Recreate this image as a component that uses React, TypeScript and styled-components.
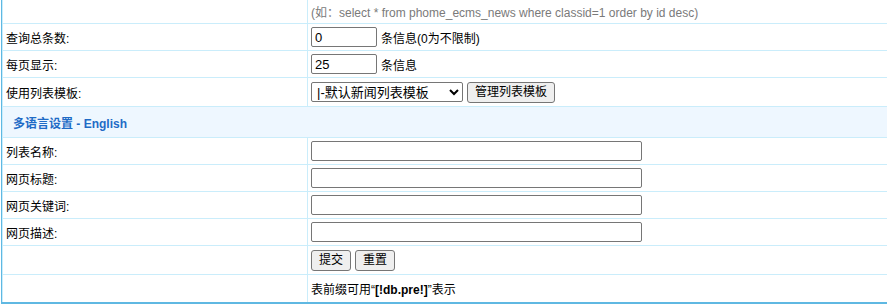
import React from 'react';
import styled, { createGlobalStyle } from 'styled-components';

const GlobalStyle = createGlobalStyle`
  html, body {
    margin: 0;
    padding: 0;
    background: #fff;
    overflow: hidden;
  }
  body {
    font-family: "Liberation Sans", "Noto Sans CJK SC", sans-serif;
    font-size: 12px;
    color: #000;
  }
`;

// Styled components
const Page = styled.div`
  padding-left: 1px;
  width: 900px;
`;

const Table = styled.div`
  border-left: 1px solid #5fb8e2;
  border-bottom: 2px solid #5fb8e2;
  display: flex;
  flex-direction: column;
`;

const Row = styled.div<{ $h: number; $head?: boolean }>`
  display: grid;
  grid-template-columns: 305px 1fr;
  height: ${(p) => p.$h}px;
  border-bottom: 1px solid #caedfb;
  border-left: 1px solid #caedfb;
  background: ${(p) => (p.$head ? '#eef7ff' : '#fff')};
  box-sizing: border-box;
  &:last-child {
    border-bottom: none;
  }
`;

const Label = styled.div`
  display: flex;
  align-items: center;
  padding-left: 3px;
  border-right: 1px solid #caedfb;
`;

const Field = styled.div`
  display: flex;
  align-items: center;
  gap: 4px;
  padding-left: 3px;
`;

const HeadCell = styled.div`
  grid-column: 1 / -1;
  display: flex;
  align-items: center;
  padding-left: 10px;
  color: #1f6bc6;
  font-weight: bold;
  font-size: 12px;
`;

const Hint = styled.span`
  color: #7a7a7a;
`;

const TextInput = styled.input<{ $w: number }>`
  box-sizing: border-box;
  width: ${(p) => p.$w}px;
  height: 20px;
  border: 1px solid #767676;
  border-radius: 2px;
  padding: 0 3px;
  font-family: inherit;
  font-size: 13px;
  color: #000;
  background: #fff;
  outline: none;
`;

const Select = styled.select`
  box-sizing: border-box;
  width: 152px;
  height: 20px;
  border: 1px solid #767676;
  border-radius: 2px;
  font-family: inherit;
  font-size: 13px;
  color: #000;
  background: #fff;
  padding: 0 1px;
`;

const Button = styled.button`
  box-sizing: border-box;
  height: 21px;
  padding: 0 7px;
  border: 1px solid #767676;
  border-radius: 3px;
  background: #efefef;
  font-family: inherit;
  font-size: 12px;
  color: #000;
  line-height: 1;
`;

const Strong = styled.b`
  font-weight: bold;
`;

const fields = ['列表名称:', '网页标题:', '网页关键词:', '网页描述:'];

export default function App() {
  return (
    <Page>
      <GlobalStyle />
      <Table>
        <Row $h={24}>
          <Label />
          <Field>
            <Hint>(如：select * from phome_ecms_news where classid=1 order by id desc)</Hint>
          </Field>
        </Row>
        <Row $h={27}>
          <Label>查询总条数:</Label>
          <Field>
            <TextInput $w={66} defaultValue="0" />
            <span>条信息(0为不限制)</span>
          </Field>
        </Row>
        <Row $h={27}>
          <Label>每页显示:</Label>
          <Field>
            <TextInput $w={66} defaultValue="25" />
            <span>条信息</span>
          </Field>
        </Row>
        <Row $h={29}>
          <Label>使用列表模板:</Label>
          <Field>
            <Select defaultValue="1">
              <option value="1">|-默认新闻列表模板</option>
            </Select>
            <Button type="button">管理列表模板</Button>
          </Field>
        </Row>
        <Row $h={31} $head>
          <HeadCell>多语言设置 - English</HeadCell>
        </Row>
        {fields.map((f) => (
          <Row $h={27} key={f}>
            <Label>{f}</Label>
            <Field>
              <TextInput $w={331} />
            </Field>
          </Row>
        ))}
        <Row $h={29}>
          <Label />
          <Field>
            <Button type="submit">提交</Button>
            <Button type="reset">重置</Button>
          </Field>
        </Row>
        <Row $h={27}>
          <Label />
          <Field>
            <span>
              表前缀可用“<Strong>[!db.pre!]</Strong>”表示
            </span>
          </Field>
        </Row>
      </Table>
    </Page>
  );
}
